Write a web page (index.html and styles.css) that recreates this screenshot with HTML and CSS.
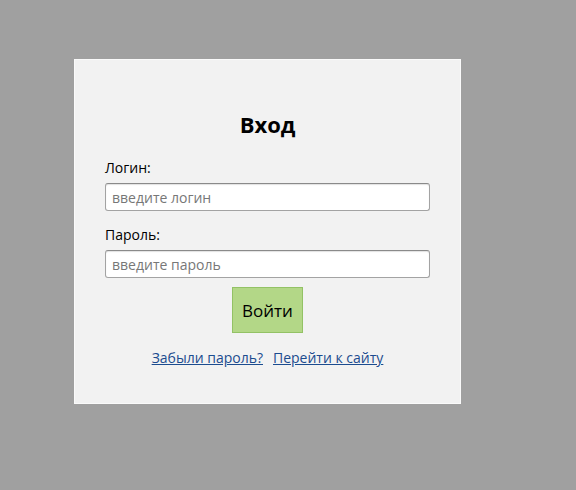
FILE: index.html
```html
<!DOCTYPE html>
<html lang="ru">
<head>
<meta charset="utf-8">
<title>Вход</title>
<link rel="stylesheet" href="styles.css">
</head>
<body>
<div class="page">
  <form class="card">
    <h1 class="title">Вход</h1>
    <label class="label" for="login">Логин:</label>
    <input class="field" id="login" type="text" placeholder="введите логин">
    <label class="label label-second" for="pass">Пароль:</label>
    <input class="field" id="pass" type="password" placeholder="введите пароль">
    <div class="actions">
      <button class="btn" type="button">Войти</button>
    </div>
    <div class="links">
      <a href="#" class="link">Забыли пароль?</a>
      <a href="#" class="link">Перейти к сайту</a>
    </div>
  </form>
</div>
</body>
</html>
```
FILE: styles.css
```css
html, body {
  margin: 0;
  padding: 0;
  background: #a0a0a0;
  font-family: "Open Sans", "Noto Sans", sans-serif;
  color: #000;
}
.page {
  padding: 59px 0 0 74px;
  height: 431px;
  box-sizing: border-box;
}
.card {
  width: 387px;
  height: 345px;
  box-sizing: border-box;
  background: #f2f2f2;
  border: 1px solid #fafafa;
  padding: 49px 30px 0 30px;
  display: flex;
  flex-direction: column;
}
.title {
  margin: 0;
  font-size: 22px;
  font-weight: 700;
  line-height: 30px;
  text-align: center;
}
.label {
  margin-top: 19px;
  font-size: 14px;
  line-height: 20px;
}
.label-second {
  margin-top: 14px;
}
.field {
  margin: 5px 0 0 0;
  height: 28px;
  box-sizing: border-box;
  width: 100%;
  border: 1px solid #a3a3a3;
  border-top-color: #8a8a8a;
  border-radius: 3px;
  box-shadow: inset 0 1px 1px rgba(0,0,0,0.12);
  background: #fff;
  padding: 0 6px;
  font-family: "Open Sans", "Noto Sans", sans-serif;
  font-size: 14px;
  color: #000;
  outline: none;
}
.field::placeholder {
  color: #777;
}
.actions {
  display: flex;
  justify-content: center;
  margin-top: 9px;
}
.btn {
  width: 71px;
  height: 46px;
  background: #b3d787;
  border: 1px solid #93c265;
  border-radius: 0;
  font-family: "Open Sans", "Noto Sans", sans-serif;
  font-size: 17px;
  color: #000;
  padding: 0;
}
.links {
  margin-top: 15px;
  display: flex;
  justify-content: center;
  gap: 10px;
  font-size: 14px;
  line-height: 20px;
}
.link {
  color: #1c4c8f;
  text-decoration: underline;
}
```
